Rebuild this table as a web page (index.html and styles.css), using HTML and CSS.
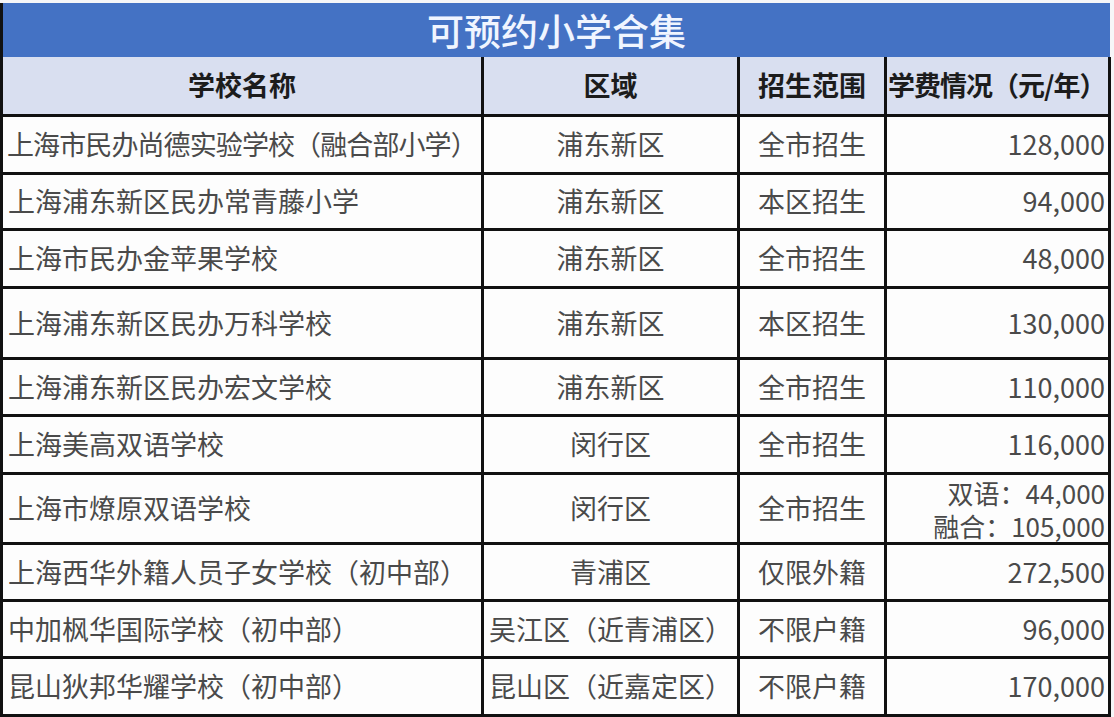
FILE: index.html
```html
<!DOCTYPE html>
<html lang="zh-CN">
<head>
<meta charset="utf-8">
<title>可预约小学合集</title>
<link rel="stylesheet" href="styles.css">
</head>
<body>
<div class="sheet">
  <div class="title">可预约小学合集</div>
  <div class="grid">
    <div class="cell head">学校名称</div>
    <div class="cell head">区域</div>
    <div class="cell head">招生范围</div>
    <div class="cell head fee-head">学费情况（元/年）</div>

    <div class="cell name tight">上海市民办尚德实验学校（融合部小学）</div>
    <div class="cell mid">浦东新区</div>
    <div class="cell mid">全市招生</div>
    <div class="cell fee">128,000</div>

    <div class="cell name">上海浦东新区民办常青藤小学</div>
    <div class="cell mid">浦东新区</div>
    <div class="cell mid">本区招生</div>
    <div class="cell fee">94,000</div>

    <div class="cell name">上海市民办金苹果学校</div>
    <div class="cell mid">浦东新区</div>
    <div class="cell mid">全市招生</div>
    <div class="cell fee">48,000</div>

    <div class="cell name">上海浦东新区民办万科学校</div>
    <div class="cell mid">浦东新区</div>
    <div class="cell mid">本区招生</div>
    <div class="cell fee">130,000</div>

    <div class="cell name">上海浦东新区民办宏文学校</div>
    <div class="cell mid">浦东新区</div>
    <div class="cell mid">全市招生</div>
    <div class="cell fee">110,000</div>

    <div class="cell name">上海美高双语学校</div>
    <div class="cell mid">闵行区</div>
    <div class="cell mid">全市招生</div>
    <div class="cell fee">116,000</div>

    <div class="cell name">上海市燎原双语学校</div>
    <div class="cell mid">闵行区</div>
    <div class="cell mid">全市招生</div>
    <div class="cell fee two"><span class="line">双语：44,000</span><span class="line">融合：105,000</span></div>

    <div class="cell name">上海西华外籍人员子女学校（初中部）</div>
    <div class="cell mid">青浦区</div>
    <div class="cell mid">仅限外籍</div>
    <div class="cell fee">272,500</div>

    <div class="cell name">中加枫华国际学校（初中部）</div>
    <div class="cell mid">吴江区（近青浦区）</div>
    <div class="cell mid">不限户籍</div>
    <div class="cell fee">96,000</div>

    <div class="cell name">昆山狄邦华耀学校（初中部）</div>
    <div class="cell mid">昆山区（近嘉定区）</div>
    <div class="cell mid">不限户籍</div>
    <div class="cell fee">170,000</div>
  </div>
</div>
</body>
</html>
```

FILE: styles.css
```css
html, body {
  margin: 0;
  padding: 0;
  background: #f6f6f8;
}

body {
  font-family: "Noto Sans CJK SC", "Noto Sans", sans-serif;
}

.sheet {
  width: 1111px;
  padding-top: 3px;
}

.title {
  height: 54px;
  width: 1107px;
  border-left: 3px solid #111;
  background: #4472c4;
  color: #f0f5ff;
  font-size: 37px;
  font-weight: 500;
  display: flex;
  align-items: center;
  justify-content: center;
  line-height: 1;
}

.grid {
  display: grid;
  grid-template-columns: 478px 253px 144px 221px;
  grid-template-rows: 57px 55px 53px 55px 68px 54px 55px 67px 54px 54px 55px;
  gap: 3px;
  padding: 0 3px 3px 3px;
  background: #111;
}

.cell {
  background: #fdfdfd;
  color: #4a4a4a;
  font-size: 27px;
  line-height: 1.2;
  display: flex;
  align-items: center;
  white-space: nowrap;
  overflow: hidden;
}

.head {
  background: #d9dff0;
  color: #1c1c1c;
  font-weight: 700;
  justify-content: center;
}

.fee-head {
  justify-content: flex-start;
  padding-left: 1px;
  letter-spacing: -1px;
}

.name {
  padding-left: 5px;
}

.tight {
  padding-left: 4px;
  letter-spacing: -0.9px;
}

.mid {
  justify-content: center;
}

.fee {
  justify-content: flex-end;
  padding-right: 3px;
}

.two {
  flex-direction: column;
  align-items: flex-end;
  justify-content: center;
}

.line {
  display: block;
  font-size: 26px;
  line-height: 33px;
  height: 33px;
}
```
